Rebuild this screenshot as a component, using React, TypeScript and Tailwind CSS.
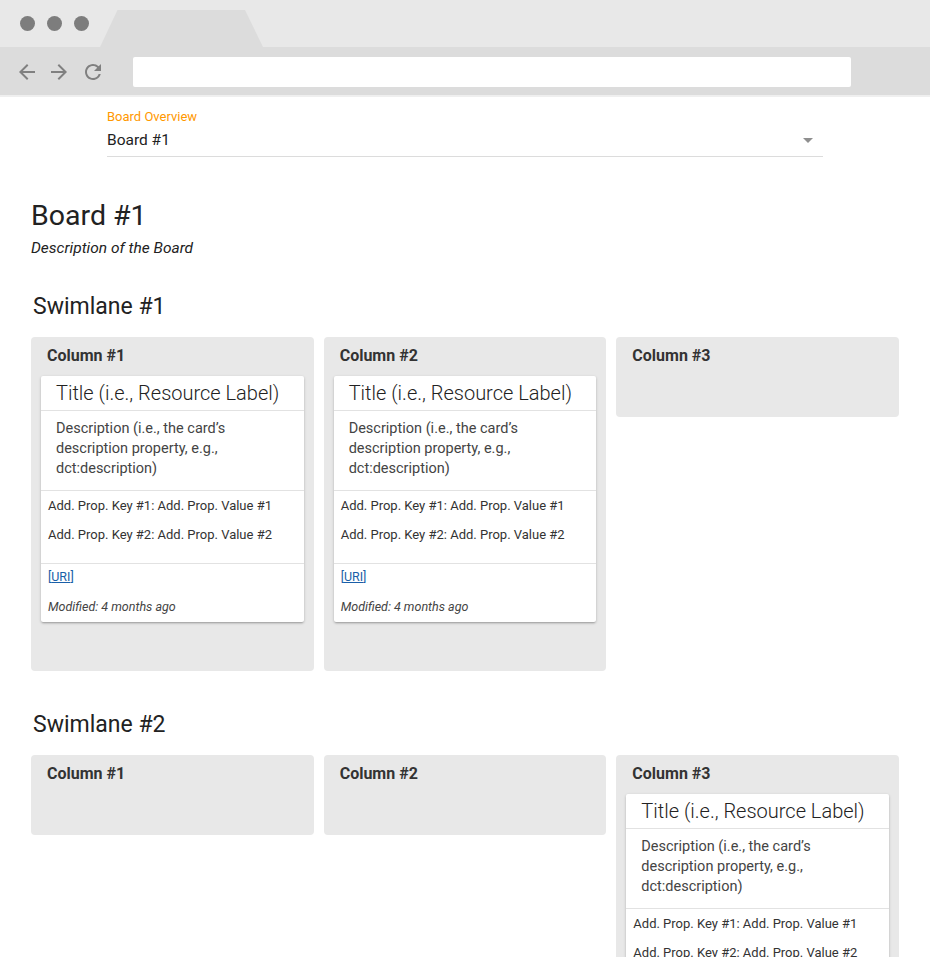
import { MdArrowBack, MdArrowForward, MdRefresh, MdArrowDropDown } from 'react-icons/md'

type Card = { title: string; description: string; props: string[]; modified: string }

const sampleCard: Card = {
  title: 'Title (i.e., Resource Label)',
  description: 'Description (i.e., the card’s description property, e.g., dct:description)',
  props: ['Add. Prop. Key #1: Add. Prop. Value #1', 'Add. Prop. Key #2: Add. Prop. Value #2'],
  modified: 'Modified: 4 months ago',
}

const swimlanes: { name: string; columns: { name: string; cards: Card[] }[] }[] = [
  {
    name: 'Swimlane #1',
    columns: [
      { name: 'Column #1', cards: [sampleCard] },
      { name: 'Column #2', cards: [sampleCard] },
      { name: 'Column #3', cards: [] },
    ],
  },
  {
    name: 'Swimlane #2',
    columns: [
      { name: 'Column #1', cards: [] },
      { name: 'Column #2', cards: [] },
      { name: 'Column #3', cards: [sampleCard] },
    ],
  },
]

function BrowserChrome() {
  return (
    <div>
      <div className="flex h-[47px] bg-[#e8e8e8]">
        <div className="flex w-[100px] items-center gap-[12px] pl-[20px]">
          <span className="h-[15px] w-[15px] rounded-full bg-[#7d7d7d]" />
          <span className="h-[15px] w-[15px] rounded-full bg-[#7d7d7d]" />
          <span className="h-[15px] w-[15px] rounded-full bg-[#7d7d7d]" />
        </div>
        <svg className="self-end" width="163" height="37" viewBox="0 0 163 37">
          <polygon points="0,37 17.5,0 145,0 163,37" fill="#dcdcdc" />
        </svg>
      </div>
      <div className="flex h-[48px] items-start bg-[#dcdcdc] pt-[10px]">
        <div className="flex h-[30px] w-[133px] items-center gap-[8px] pl-[15px] text-[#808080]">
          <MdArrowBack size={24} />
          <MdArrowForward size={24} />
          <MdRefresh size={24} className="ml-[2px]" />
        </div>
        <div className="h-[30px] w-[718px] rounded-[2px] bg-white" />
      </div>
      <div className="h-[2px] bg-[#efefef]" />
    </div>
  )
}

function BoardCard({ card }: { card: Card }) {
  return (
    <div className="mb-[8px] rounded-[2px] bg-white shadow-[0_1px_3px_rgba(0,0,0,0.22),0_2px_2px_-1px_rgba(0,0,0,0.18)]">
      <div className="border-b border-[#e2e2e2] px-[15px] py-[5px] text-[20px] font-light leading-[24px] text-[#222]">
        {card.title}
      </div>
      <div className="border-b border-[#e2e2e2] px-[15px] pt-[8px] pb-[11px] text-[14.5px] leading-[20px] text-[#444]">
        {card.description}
      </div>
      <div className="border-b border-[#e2e2e2] px-[7px] pb-[14px]">
        {card.props.map(p => (
          <div key={p} className="flex h-[29px] items-center text-[13px] text-[#333]">{p}</div>
        ))}
      </div>
      <div className="px-[7px] pt-[5px] pb-[7px] text-[12.5px] leading-[16px]">
        <div className="text-[#1a5fa8]">[<a className="underline">URI</a>]</div>
        <div className="mt-[14px] italic text-[#444]">{card.modified}</div>
      </div>
    </div>
  )
}

export default function App() {
  return (
    <div className="min-h-screen bg-white font-['Roboto','Liberation_Sans',sans-serif]">
      <BrowserChrome />

      <div className="px-[31px] pb-10">
        {/* board selector */}
        <div className="mx-auto w-[716px] pt-[13px]">
          <div className="text-[13px] leading-[14px] text-[#ff9800]">Board Overview</div>
          <div className="mt-[4px] flex items-center justify-between border-b border-[#dcdcdc] pb-[4px]">
            <span className="text-[15.5px] leading-[20px] text-[#222]">Board #1</span>
            <MdArrowDropDown size={24} className="mr-[3px] text-[#8f8f8f]" />
          </div>
        </div>

        <h1 className="mt-[43px] text-[28.5px] leading-[32px] text-[#222]">Board #1</h1>
        <p className="mt-[6px] text-[15.5px] italic leading-[20px] text-[#222]">Description of the Board</p>

        <div className="mt-[35px]">
          {swimlanes.map((lane, i) => (
            <section key={lane.name} className={i > 0 ? 'mt-[40px]' : ''}>
              <h2 className="pl-[2px] text-[23px] leading-[28px] text-[#222]">{lane.name}</h2>
              <div className="mt-[16px] grid grid-cols-3 items-start gap-[10px]">
                {lane.columns.map(col => (
                  <div key={col.name} className="rounded-[4px] bg-[#e8e8e8] px-[10px] pt-[9px] pb-[41px]">
                    <div className="mb-[10px] pl-[6px] text-[16px] font-bold leading-[20px] text-[#333]">{col.name}</div>
                    {col.cards.map((c, j) => (
                      <BoardCard key={j} card={c} />
                    ))}
                  </div>
                ))}
              </div>
            </section>
          ))}
        </div>
      </div>
    </div>
  )
}
